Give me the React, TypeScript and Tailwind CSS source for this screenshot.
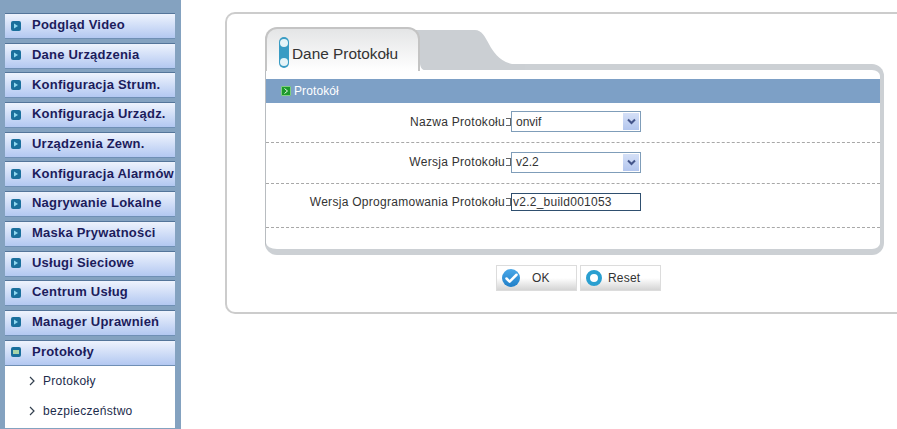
import { Check } from "lucide-react";

const menu = [
  "Podgląd Video",
  "Dane Urządzenia",
  "Konfiguracja Strum.",
  "Konfiguracja Urządz.",
  "Urządzenia Zewn.",
  "Konfiguracja Alarmów",
  "Nagrywanie Lokalne",
  "Maska Prywatności",
  "Usługi Sieciowe",
  "Centrum Usług",
  "Manager Uprawnień",
];

const MenuIcon = ({ open }: { open?: boolean }) => (
  <span className="flex h-[10px] w-[10px] shrink-0 items-center justify-center rounded-[2px] bg-[#1a6f9c]">
    {open ? (
      <span className="h-[4px] w-[6px] bg-[#a8d4a8]" />
    ) : (
      <svg width="6" height="6" viewBox="0 0 6 6">
        <path d="M1 0.5 L5 3 L1 5.5 Z" fill="#8fd8f0" />
      </svg>
    )}
  </span>
);

const MenuItem = ({ label, open }: { label: string; open?: boolean }) => (
  <div className="flex h-[26px] shrink-0 items-center gap-[11px] border-y border-t-[#54759a] border-b-[#6f8fb5] bg-gradient-to-b from-[#eef3fd] to-[#b3c8f1] pb-px pl-[6px]">
    <MenuIcon open={open} />
    <span className="whitespace-nowrap pb-px text-[13px] font-bold tracking-[0.22px] text-[#1c1c5c]">{label}</span>
  </div>
);

const SubItem = ({ label }: { label: string }) => (
  <div className="flex h-[30px] items-center gap-[7px] pb-[2px] pl-[23px] text-[12px] tracking-[0.3px] text-[#1c2c4c]">
    <svg width="8" height="10" viewBox="0 0 8 10" fill="none">
      <path d="M2 1 L6 5 L2 9" stroke="#33404f" strokeWidth="1.2" />
    </svg>
    {label}
  </div>
);

const Colon = () => (
  <span className="ml-[1px] flex h-[8px] w-[5px] flex-col justify-between border-r border-[#666]">
    <span className="h-px bg-[#666]" />
    <span className="h-px bg-[#666]" />
  </span>
);

const Row = ({ label, children, h }: { label: string; children: React.ReactNode; h: string }) => (
  <div className={`flex items-center border-b border-dashed border-[#a8a8a8] ${h}`}>
    <div className="flex w-[245px] items-center justify-end text-[12px] tracking-[0.28px] text-[#333]">
      {label}
      <Colon />
    </div>
    {children}
  </div>
);

const FakeSelect = ({ value }: { value: string }) => (
  <div className="flex h-[21px] w-[130px] items-center justify-between border border-[#7f9db9] bg-white pl-[4px] pr-px text-[12px] text-[#333]">
    {value}
    <span className="flex h-[17px] w-[16px] items-center justify-center bg-gradient-to-b from-[#d5e0f7] to-[#b3c6ee]">
      <svg width="9" height="7" viewBox="0 0 9 7" fill="none">
        <path d="M1 1.5 L4.5 5 L8 1.5" stroke="#44558a" strokeWidth="2" />
      </svg>
    </span>
  </div>
);

const Button = ({ icon, label, gap }: { icon: React.ReactNode; label: string; gap: string }) => (
  <div className={`flex h-[26px] w-[81px] items-center border border-[#dcdcdc] bg-gradient-to-b from-white via-white to-[#d4d4d4] pl-[5px] text-[12px] tracking-[0.2px] text-[#333] ${gap}`}>
    {icon}
    {label}
  </div>
);

export default function App() {
  return (
    <div className="flex h-[429px] w-[897px] overflow-hidden bg-white font-['Liberation_Sans',Arial,sans-serif]">
      {/* menu */}
      <aside className="flex h-[429px] w-[181px] shrink-0 flex-col gap-[3.7px] overflow-hidden bg-[#84a2c0] pl-[5px] pr-[6px] pt-[13px]">
        {menu.map((m) => (
          <MenuItem key={m} label={m} />
        ))}
        <div className="flex flex-col">
          <MenuItem label="Protokoły" open />
          <div className="h-[62px] bg-white pt-px">
            <SubItem label="Protokoły" />
            <SubItem label="bezpieczeństwo" />
          </div>
        </div>
      </aside>

      <main className="flex-1 pl-[44px] pt-[12px]">
        <div className="h-[302px] w-[700px] rounded-l-[10px] border-2 border-r-0 border-[#cccccc] pl-[38px] pt-[13px]">
          <div className="relative w-[619px]">
            {/* gray tab shape */}
            <svg className="absolute left-[140px] top-[3px]" width="120" height="40" viewBox="0 0 120 40">
              <path d="M0 0 H70 C84 0 82 28 107 34 H120 V40 H0 Z" fill="#cbcfd3" />
            </svg>
            <div className="relative z-10 flex h-[44px] w-[155px] items-center gap-[3px] rounded-t-[12px] border-2 border-b-0 border-[#c4c4c4] bg-gradient-to-b from-[#e4e5e6] to-white pl-[12px] pt-[6px] text-[15.4px] text-[#333]">
              <span className="-mt-[2px] flex h-[31px] w-[10px] flex-col items-center justify-between rounded-full bg-[#3a9cc4] py-[2px]">
                <span className="h-[8px] w-[8px] rounded-full bg-[#e6f4f8]" />
                <span className="h-[8px] w-[8px] rounded-full bg-[#e6f4f8]" />
              </span>
              <span className="pt-[1px]">Dane Protokołu</span>
              <svg className="absolute bottom-0 left-[153px]" width="8" height="8" viewBox="0 0 8 8">
                <path d="M0 0 V8 H8 C3 8 0 5 0 0 Z" fill="#ffffff" />
              </svg>
            </div>
            <div className="mt-[-7px] h-[191px] rounded-b-[12px] rounded-tr-[12px] border-b-[6px] border-l border-r-[4px] border-t-[6px] border-b-[#ccd0d4] border-l-[#b8bcc0] border-r-[#ccd0d4] border-t-[#ccd0d4] bg-white pt-[9px]">
              <div className="flex h-[24px] items-center gap-[3px] bg-[#7da0c6] pl-[15px] text-[12px] tracking-[0.1px] text-white">
                <span className="flex h-[10px] w-[10px] items-center justify-center rounded-[1px] border border-[#80d080] bg-[#1d9a2d]">
                  <svg width="6" height="6" viewBox="0 0 6 6" fill="none">
                    <path d="M1.5 0.5 L4.5 3 L1.5 5.5" stroke="#e8fbe8" strokeWidth="1" />
                  </svg>
                </span>
                Protokół
              </div>
              <Row label="Nazwa Protokołu" h="h-[40px] pb-[2px]">
                <FakeSelect value="onvif" />
              </Row>
              <Row label="Wersja Protokołu" h="h-[41px] pb-[2px]">
                <FakeSelect value="v2.2" />
              </Row>
              <Row label="Wersja Oprogramowania Protokołu" h="h-[44px] pb-[8px]">
                <div className="flex h-[18px] w-[130px] items-center border border-[#2f4f6f] pl-px text-[12px] tracking-[0.25px] text-[#333]">
                  v2.2_build001053
                </div>
              </Row>
            </div>
            <div className="ml-[231px] mt-[10px] flex gap-[3px]">
              <Button
                gap="gap-[12px]"
                label="OK"
                icon={
                  <span className="flex h-[18px] w-[18px] items-center justify-center rounded-full bg-gradient-to-b from-[#4aa8e8] to-[#1f7fc8]">
                    <Check size={15} strokeWidth={4} color="#ffffff" />
                  </span>
                }
              />
              <Button
                gap="gap-[6px]"
                label="Reset"
                icon={<span className="h-[16px] w-[16px] rounded-full border-[4px] border-[#2a9fd0] bg-white" />}
              />
            </div>
          </div>
        </div>
      </main>
    </div>
  );
}
